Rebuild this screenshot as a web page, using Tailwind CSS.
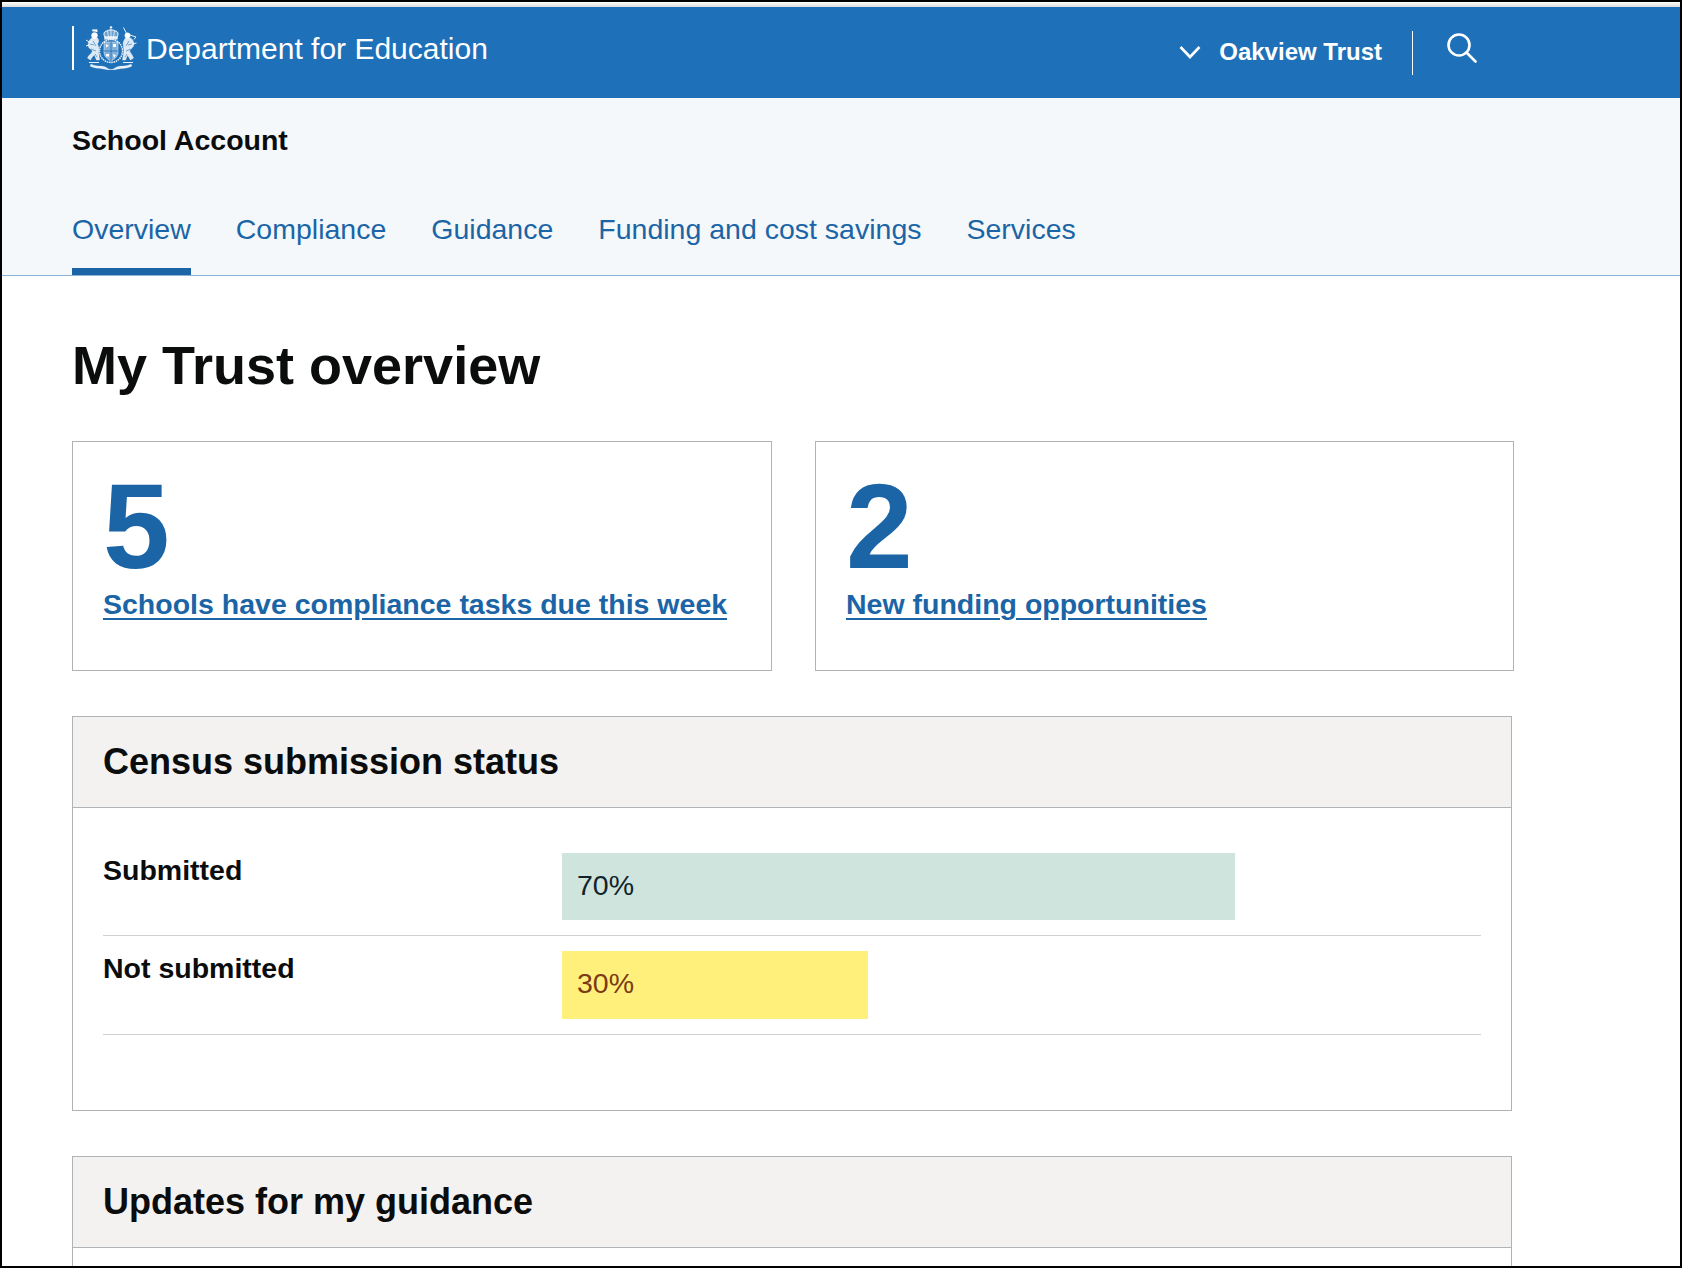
<!DOCTYPE html>
<html lang="en">
<head>
<meta charset="utf-8">
<title>School Account</title>
<script src="https://cdn.jsdelivr.net/npm/@tailwindcss/browser@4"></script>
</head>
<body class="bg-white font-['Liberation_Sans',Arial,sans-serif] text-[#0b0c0c]">
<div class="h-[1268px] overflow-hidden border-2 border-black">

    <!-- Top strip -->
    <div class="h-[5px] bg-gradient-to-b from-white to-[#dcdcdc]"></div>

    <!-- Department header -->
    <header class="h-[91px] bg-[#1e70b8] flex justify-between text-white">
        <div class="flex items-start pl-[70px] pt-[19px]">
            <div class="w-[2px] h-[44px] bg-white"></div>
            <svg class="ml-[11px] w-[52px] h-[44px]" viewBox="0 0 52 44" fill="#fff" stroke="#fff" stroke-width=".4">
                <!-- crown -->
                <path d="M26 0l1.200 1.500-1.200 1.200-1.200-1.200z"/>
                <path d="M20 11c-2-3-1-6 2-6 1-1.500 7-1.500 8 0 3 0 4 3 2 6z" fill-opacity=".35" stroke-width="1"/>
                <path d="M26 3v8M22.500 5l1 6M29.500 5l-1 6" stroke-width=".7"/>
                <rect x="19.500" y="11" width="13" height="2.200" fill-opacity=".85"/>
                <!-- garter and shield -->
                <circle cx="26" cy="25" r="11.500" fill="none" stroke-width="1.500" stroke-dasharray="1.600 .7" stroke-opacity=".9"/>
                <path d="M19 16h14v10c0 5-4 7.500-7 9-3-1.500-7-4-7-9z" fill-opacity=".45" stroke-width=".5"/>
                <path d="M26 16v19M19 25h14" stroke="#1e70b8" stroke-width=".8"/>
                <path d="M21 18l3 1.500-3 2zM28 18h3v3h-3zM21 28h3v2.500h-3zM28 28l3 1-2 3z" stroke="none"/>
                <!-- lion -->
                <path d="M7 5l1-2 1 1 1-1 1 1 1-1 .5 3z" stroke-width=".2"/>
                <circle cx="9.500" cy="9.500" r="3"/>
                <path d="M6.500 12c-3 3-4 6-3 9 1 2 3 2 4 4-1 3-4 4-5 7l3 2c1-2 2-4 4-5l2 5h3l-1-8c1-3 0-5-1-8 1-2 2-3 0-6z" fill-opacity=".85"/>
                <path d="M1 14l5 3M1 20l3-1M4 36.500h10" fill="none" stroke-width=".9"/>
                <path d="M8 15l3 5M6 23l5 2M5 18l4 1M10 28l2 3" stroke="#1e70b8" stroke-width=".6" fill="none"/>
                <!-- unicorn -->
                <path d="M38.500 1.500l3.500 7" fill="none" stroke-width=".9"/>
                <circle cx="42.500" cy="9.500" r="2.700"/>
                <path d="M40.500 12c-2 3-3 5-2 8 0 3 1 5 0 8l-1 6h3l2-5 3 5 3-2c-1-3-3-5-4-7 1-2 3-3 4-5 1-3 0-6-3-8z" fill-opacity=".85"/>
                <path d="M45 9l6 2-2 2.500M48 18l3.500-1M38 36.500h10" fill="none" stroke-width=".9"/>
                <path d="M44 15l-3 5M46 23l-5 2M47 18l-4 1M42 28l-2 3" stroke="#1e70b8" stroke-width=".6" fill="none"/>
                <!-- motto ribbon and base -->
                <path d="M6 38c6 3 9 1.500 13 2.500 3 .8 4 3 7 3s4-2.200 7-3c4-1 7 .5 13-2.500l1 2c-5 3-10 2-13 3-3 .5-5 1-8 1s-5-.5-8-1c-3-1-8 0-13-3z" stroke-width=".2" fill-opacity=".9"/>
            </svg>
            <span class="ml-[9px] mt-[1px] text-[30px] leading-[44px]">Department for Education</span>
        </div>
        <div class="flex items-start pt-[24px] pr-[203px]">
            <svg class="mt-[14px] w-[22px] h-[15px]" viewBox="0 0 22 15" fill="none" stroke="#fff" stroke-width="2.600">
                <path d="M1.500 2l9.500 10L20.500 2"/>
            </svg>
            <span class="ml-[18px] -mt-[1px] text-[24px] leading-[44px] font-bold">Oakview Trust</span>
            <div class="ml-[30px] w-[1px] h-[44px] bg-white"></div>
            <svg class="ml-[34px] mt-[2px] w-[30px] h-[30px]" viewBox="0 0 30 30" fill="none" stroke="#fff" stroke-width="2.600" stroke-linecap="round">
                <circle cx="12" cy="12" r="10.500"/>
                <path d="M19.500 19.500l9 9"/>
            </svg>
        </div>
    </header>

    <!-- Service name and tabs -->
    <div class="h-[178px] bg-[#f4f8fb] border-b border-[#8db4d6] pl-[70px] flex flex-col justify-between">
        <div class="pt-[20px] text-[28.5px] leading-[44px] font-bold">School Account</div>
        <nav class="flex gap-[45px] text-[28.5px] text-[#1b65a6]">
            <a href="#" class="h-[67px] leading-[42px] border-b-[7px] border-[#1b65a6]">Overview</a>
            <a href="#" class="h-[67px] leading-[42px]">Compliance</a>
            <a href="#" class="h-[67px] leading-[42px]">Guidance</a>
            <a href="#" class="h-[67px] leading-[42px]">Funding and cost savings</a>
            <a href="#" class="h-[67px] leading-[42px]">Services</a>
        </nav>
    </div>

    <main class="pl-[70px] w-[1512px]">
        <h1 class="pt-[59px] pb-[46px] text-[54px] leading-[60px] font-bold">My Trust overview</h1>

        <!-- Summary cards -->
        <div class="flex gap-[43px] w-[1442px]">
            <div class="w-[700px] h-[230px] border border-[#b1b4b6] px-[30px] pt-[24px]">
                <div class="h-[120px] text-[120px] leading-[120px] font-bold text-[#1b65a6]">5</div>
                <a href="#" class="text-[28.5px] leading-[36px] font-bold text-[#1b65a6] underline underline-offset-[4px]">Schools have compliance tasks due this week</a>
            </div>
            <div class="w-[699px] h-[230px] border border-[#b1b4b6] px-[30px] pt-[24px]">
                <div class="h-[120px] text-[120px] leading-[120px] font-bold text-[#1b65a6]">2</div>
                <a href="#" class="text-[28.5px] leading-[36px] font-bold text-[#1b65a6] underline underline-offset-[4px]">New funding opportunities</a>
            </div>
        </div>

        <!-- Census submission status -->
        <section class="mt-[45px] w-[1440px] h-[395px] border border-[#b1b4b6]">
            <div class="h-[91px] bg-[#f3f2f1] border-b border-[#b1b4b6] px-[30px] flex items-center">
                <h2 class="text-[36px] leading-[44px] font-bold">Census submission status</h2>
            </div>
            <div class="px-[30px] pt-[45px]">
                <div class="flex h-[83px] border-b border-[#cfd1d2]">
                    <div class="w-[459px] text-[28.5px] leading-[34px] font-bold">Submitted</div>
                    <div class="w-[673px] h-[67px] bg-[#cfe4dc] px-[15px] text-[28.5px] leading-[64px] text-[#10242b]">70%</div>
                </div>
                <div class="flex h-[99px] pt-[15px] border-b border-[#cfd1d2]">
                    <div class="w-[459px] text-[28.5px] leading-[34px] font-bold">Not submitted</div>
                    <div class="w-[306px] h-[68px] bg-[#fff07c] px-[15px] text-[28.5px] leading-[64px] text-[#7a3a14]">30%</div>
                </div>
            </div>
        </section>

        <!-- Updates for my guidance -->
        <section class="mt-[45px] w-[1440px] h-[200px] border border-[#b1b4b6]">
            <div class="h-[91px] bg-[#f3f2f1] border-b border-[#b1b4b6] px-[30px] flex items-center">
                <h2 class="text-[36px] leading-[44px] font-bold">Updates for my guidance</h2>
            </div>
        </section>
    </main>
</div>
</body>
</html>
